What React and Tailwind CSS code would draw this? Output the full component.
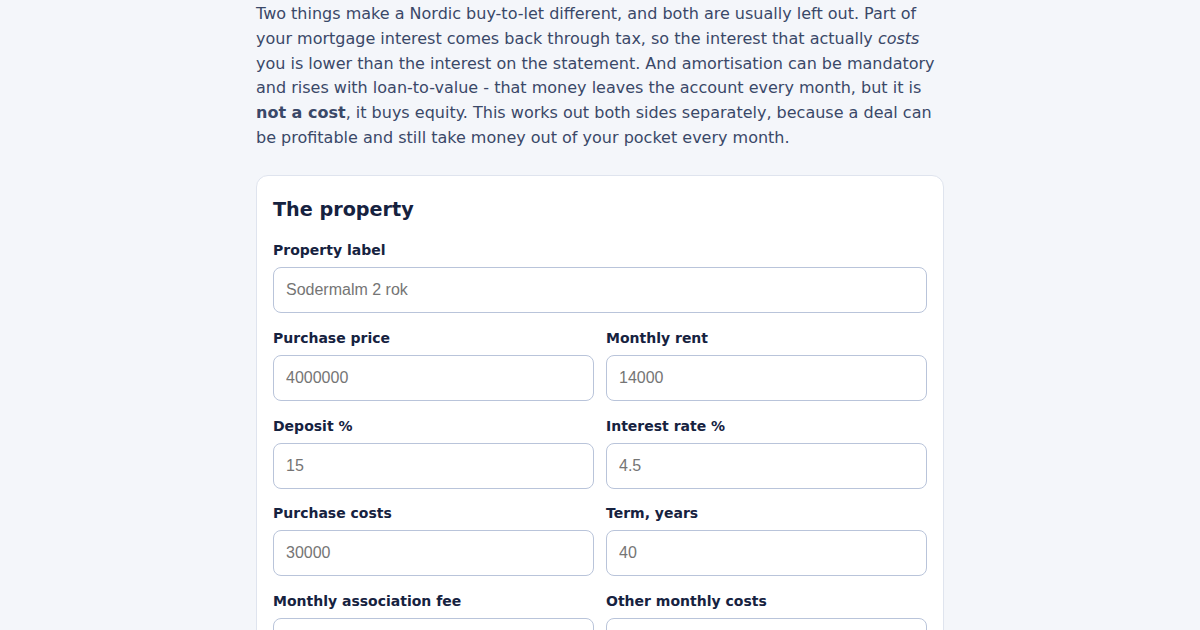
export default function App() {
  const fields = [
    ["Purchase price", "4000000", "Monthly rent", "14000"],
    ["Deposit %", "15", "Interest rate %", "4.5"],
    ["Purchase costs", "30000", "Term, years", "40"],
    ["Monthly association fee", "", "Other monthly costs", ""],
  ];

  return (
    <div className="min-h-screen bg-[#f4f6fa] font-['DejaVu_Sans',sans-serif]">
      <div className="mx-auto w-[688px]">
        {/* intro */}
        <p className="pt-[2px] text-base leading-[24.8px] text-[#3a4868]">
          Two things make a Nordic buy-to-let different, and both are usually left out. Part of
          your mortgage interest comes back through tax, so the interest that actually <em>costs</em>{" "}
          you is lower than the interest on the statement. And amortisation can be mandatory
          and rises with loan-to-value - that money leaves the account every month, but it is{" "}
          <strong>not a cost</strong>, it buys equity. This works out both sides separately, because a deal can
          be profitable and still take money out of your pocket every month.
        </p>

        {/* property card */}
        <div className="mt-[24px] rounded-xl border border-[#dfe4ee] bg-white px-4 pt-5 pb-6">
          <h2 className="text-[19.2px] font-bold leading-7 text-[#16223f]">The property</h2>

          <div className="mt-[18px]">
            <label className="mb-2 block text-sm font-bold leading-[17px] text-[#16223f]">Property label</label>
            <input
              className="block h-[46px] w-full rounded-lg border border-[#b9c4da] bg-white px-3 font-['Liberation_Sans',Arial,sans-serif] text-base text-[#1f2937] placeholder:text-[#757575] outline-none"
              placeholder="Sodermalm 2 rok"
            />
          </div>

          <div className="mt-[17px] grid grid-cols-2 gap-x-3 gap-y-[16.75px]">
            {fields.map((row) =>
              [0, 2].map((i) => (
                <div key={row[i]}>
                  <label className="mb-[9px] block text-sm font-bold leading-[16px] text-[#16223f]">{row[i]}</label>
                  <input
                    className="block h-[46px] w-full rounded-lg border border-[#b9c4da] bg-white px-3 font-['Liberation_Sans',Arial,sans-serif] text-base text-[#1f2937] placeholder:text-[#757575] outline-none"
                    placeholder={row[i + 1]}
                  />
                </div>
              ))
            )}
          </div>
        </div>
      </div>
    </div>
  );
}
